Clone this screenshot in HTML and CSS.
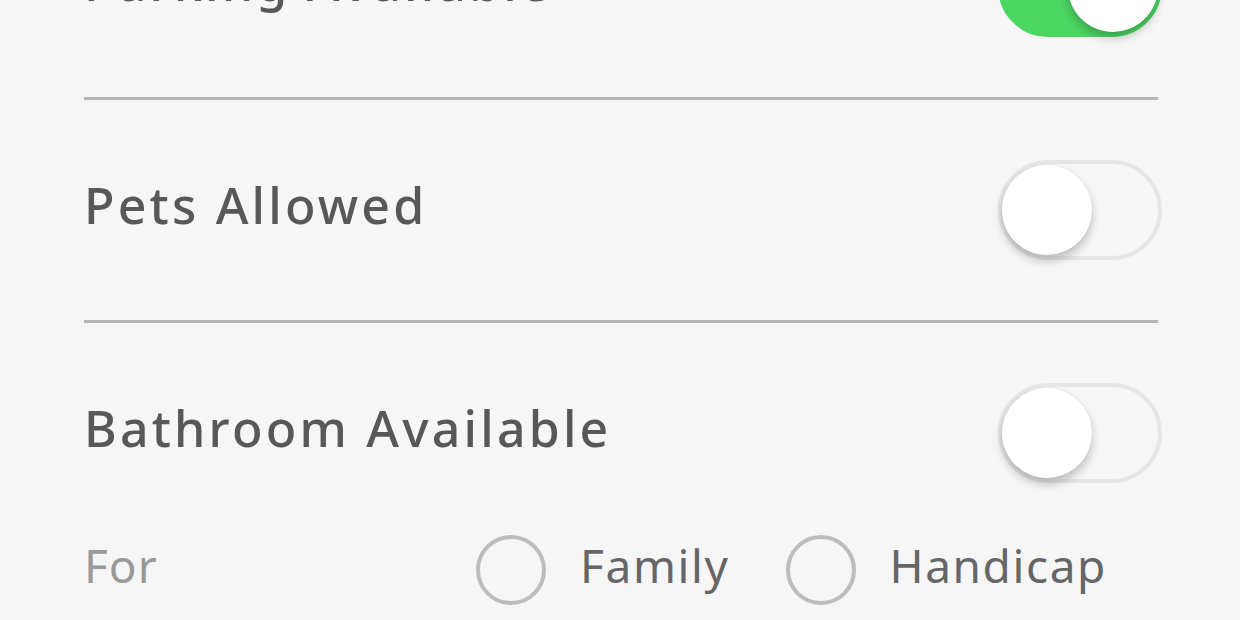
FILE: index.html
```html
<!DOCTYPE html>
<html lang="en">
<head>
  <meta charset="UTF-8">
  <meta name="viewport" content="width=device-width, initial-scale=1.0">
  <title>Amenities</title>
  <link rel="stylesheet" href="styles.css">
</head>
<body>

  <main class="settings">
    <div class="row">
      <span class="label">Parking Available</span>
      <span class="switch on"><span class="knob"></span></span>
    </div>
    <div class="row">
      <span class="label">Pets Allowed</span>
      <span class="switch"><span class="knob"></span></span>
    </div>
    <div class="row last">
      <span class="label">Bathroom Available</span>
      <span class="switch"><span class="knob"></span></span>
    </div>
    <div class="for-row">
      <span class="for-label">For</span>
      <div class="options">
        <label class="option"><span class="radio"></span><span class="option-text">Family</span></label>
        <label class="option"><span class="radio"></span><span class="option-text">Handicap</span></label>
      </div>
    </div>
  </main>

</body>
</html>
```

FILE: styles.css
```css
* {
  margin: 0;
  padding: 0;
  box-sizing: border-box;
}

html, body {
  height: 100%;
  overflow: hidden;
}

body {
  background: #f6f6f6;
  font-family: 'Noto Sans', 'Open Sans', sans-serif;
  color: #585858;
}

.settings {
  margin: -123px 82px 0 84px;
}

.row {
  display: flex;
  justify-content: space-between;
  align-items: center;
  padding: 60px 0;
  border-bottom: 3px solid #b4b4b4;
}

.row.last {
  border-bottom: none;
  padding-bottom: 30px;
}

.label {
  font-size: 50px;
  font-weight: 500;
  letter-spacing: 3.2px;
  margin-bottom: 10px;
}

.switch {
  position: relative;
  display: block;
  width: 164px;
  height: 100px;
  margin-right: -4px;
  border: 4px solid #e6e6e6;
  border-radius: 50px;
  background: #f6f6f6;
}

.switch .knob {
  position: absolute;
  top: 1px;
  left: 0;
  width: 90px;
  height: 90px;
  border-radius: 50%;
  background: #fff;
  box-shadow: 0 6px 10px rgba(0, 0, 0, 0.22), 0 0 2px rgba(0, 0, 0, 0.1);
}

.switch.on {
  background: #4cd662;
  border-color: #4cd662;
}

.switch.on .knob {
  left: auto;
  right: 0;
}

.for-row {
  display: flex;
  align-items: center;
  padding: 21px 0;
}

.for-label {
  width: 392px;
  font-size: 46px;
  letter-spacing: 1px;
  color: #999;
  margin-bottom: 10px;
}

.options {
  display: flex;
  align-items: center;
  gap: 56px;
}

.option {
  display: flex;
  align-items: center;
  gap: 34px;
  font-size: 46px;
  color: #666;
}

.option-text {
  letter-spacing: 1.6px;
  margin-bottom: 10px;
}

.radio {
  display: block;
  width: 70px;
  height: 70px;
  border: 4px solid #bdbdbd;
  border-radius: 50%;
}
```
